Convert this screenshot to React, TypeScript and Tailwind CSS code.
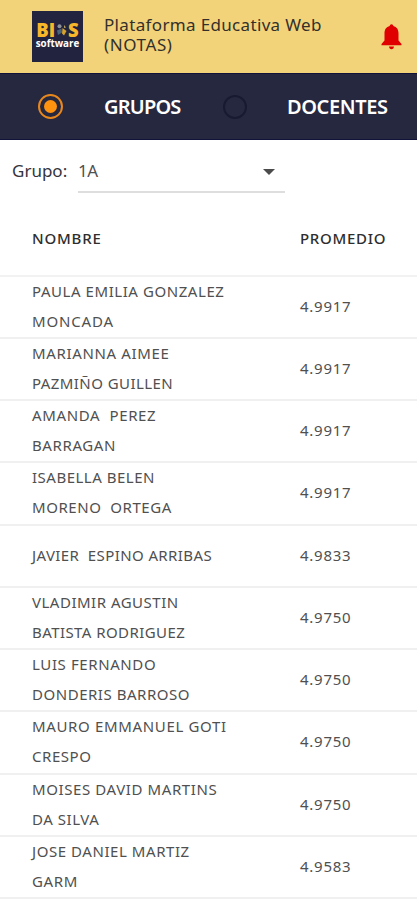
const students: { lines: { text: string; tracking: string }[]; average: string }[] = [
  { lines: [{ text: "PAULA EMILIA GONZALEZ", tracking: "tracking-[0.56px]" }, { text: "MONCADA", tracking: "tracking-[0.85px]" }], average: "4.9917" },
  { lines: [{ text: "MARIANNA AIMEE", tracking: "tracking-[0.65px]" }, { text: "PAZMIÑO GUILLEN", tracking: "tracking-[0.43px]" }], average: "4.9917" },
  { lines: [{ text: "AMANDA  PEREZ", tracking: "tracking-[0.65px]" }, { text: "BARRAGAN", tracking: "tracking-[0.6px]" }], average: "4.9917" },
  { lines: [{ text: "ISABELLA BELEN", tracking: "tracking-[0.5px]" }, { text: "MORENO  ORTEGA", tracking: "tracking-[0.55px]" }], average: "4.9917" },
  { lines: [{ text: "JAVIER  ESPINO ARRIBAS", tracking: "tracking-[0.4px]" }], average: "4.9833" },
  { lines: [{ text: "VLADIMIR AGUSTIN", tracking: "tracking-[0.5px]" }, { text: "BATISTA RODRIGUEZ", tracking: "tracking-[0.43px]" }], average: "4.9750" },
  { lines: [{ text: "LUIS FERNANDO", tracking: "tracking-[0.6px]" }, { text: "DONDERIS BARROSO", tracking: "tracking-[0.53px]" }], average: "4.9750" },
  { lines: [{ text: "MAURO EMMANUEL GOTI", tracking: "tracking-[0.65px]" }, { text: "CRESPO", tracking: "tracking-[0.55px]" }], average: "4.9750" },
  { lines: [{ text: "MOISES DAVID MARTINS", tracking: "tracking-[0.6px]" }, { text: "DA SILVA", tracking: "tracking-[0.55px]" }], average: "4.9750" },
  { lines: [{ text: "JOSE DANIEL MARTIZ", tracking: "tracking-[0.56px]" }, { text: "GARM", tracking: "tracking-[0.6px]" }], average: "4.9583" },
];

function Logo() {
  return (
    <div className="ml-8 flex h-[51px] w-[51px] shrink-0 flex-col items-center bg-[#22243f] pt-[9px] font-['Open_Sans',sans-serif]">
      <div className="flex h-[19px] items-center text-[18.5px] leading-[19px] font-extrabold text-[#f8b62b]">
        <span>BI</span>
        <svg className="h-[14px] w-[13px]" viewBox="0 0 13 14" fill="none">
          <circle cx="4.5" cy="3.2" r="2" fill="#8d9299" />
          <path d="M2 7.5 6.5 5.5 7 9.5 3 12Z" fill="#4a647c" />
          <path d="m7.5 5 4 3-2.5 4.500-2-2Z" fill="#d4a32e" />
          <path d="m9 2 2 2.500-2 .5Z" fill="#bca461" />
        </svg>
        <span>S</span>
      </div>
      <span className="text-[9.8px] leading-[10px] font-bold text-white">software</span>
    </div>
  );
}

function Header() {
  return (
    <header className="flex h-[73px] items-center bg-[#f2d37a]">
      <Logo />
      <h1 className="ml-[21px] w-[250px] pb-1 text-[17px] leading-[20px] text-[#33302c]">
        <span className="block tracking-[0.34px]">Plataforma Educativa Web</span>
        <span className="block tracking-[0.6px]">(NOTAS)</span>
      </h1>
      <svg className="ml-[27px] h-[26px] w-[21px] shrink-0" viewBox="0 0 21 26" fill="#e00000">
        <path d="M10.500 .3c1 0 1.700 .7 1.800 1.700 3.400.8 5.200 3.700 5.200 7.200v7.300l3 3.600v1.200H.5v-1.200l3-3.600V9.200C3.500 5.700 5.300 2.800 8.700 2 8.800 1 9.500.3 10.500.3ZM8 22.600h5c-.1 1.600-1.100 2.600-2.500 2.600S8.100 24.200 8 22.600Z" />
      </svg>
    </header>
  );
}

function Tabs() {
  return (
    <nav className="flex h-[67px] items-center border-y border-t-[#11133b] border-b-[#11133b] bg-[#262840] text-[20px] font-semibold text-white">
      <span className="ml-[38px] flex h-[25px] w-[25px] items-center justify-center rounded-full border-2 border-[#e8871c]">
        <span className="h-[13px] w-[13px] rounded-full bg-[#ff920f]" />
      </span>
      <span className="ml-[41px] w-[119px] tracking-[-0.8px]">GRUPOS</span>
      <span className="h-[24px] w-[24px] rounded-full border-2 border-[#171a30]" />
      <span className="ml-[40px] tracking-[-0.4px]">DOCENTES</span>
    </nav>
  );
}

export default function App() {
  return (
    <main className="h-[900px] w-[417px] overflow-hidden bg-white font-['Noto_Sans',sans-serif]">
      <Header />
      <Tabs />
      <section className="flex h-[53px] pl-3 text-[17px]">
        <span className="w-[66px] pt-[18px] leading-[26px] text-[#34343d]">Grupo:</span>
        <div className="flex w-[207px] justify-between border-b-2 border-[#dedede] pt-[18px] leading-[26px] text-[#505050]">
          <span className="tracking-[-0.5px]">1A</span>
          <span className="mt-[11px] mr-[10px] h-0 w-0 border-x-[6px] border-t-[6px] border-x-transparent border-t-[#4b4b4b]" />
        </div>
      </section>
      <div className="flex h-[83.5px] items-center border-b-2 border-[#f2f2f2] pl-8 pt-[8px] text-[15px] font-medium text-[#2e2e2e]">
        <span className="w-[268px] tracking-[0.8px]">NOMBRE</span>
        <span className="tracking-[0.7px]">PROMEDIO</span>
      </div>
      {students.map((student) => (
        <div
          key={student.lines[0].text}
          className="flex h-[62.25px] items-center border-b-2 border-[#f0f0f0] pb-[2px] pl-8 text-[15px] leading-[30px] text-[#505050]"
        >
          <div className="w-[268px] whitespace-pre">
            {student.lines.map((line) => (
              <div key={line.text} className={line.tracking}>{line.text}</div>
            ))}
          </div>
          <span className="tracking-[0.75px]">{student.average}</span>
        </div>
      ))}
    </main>
  );
}
